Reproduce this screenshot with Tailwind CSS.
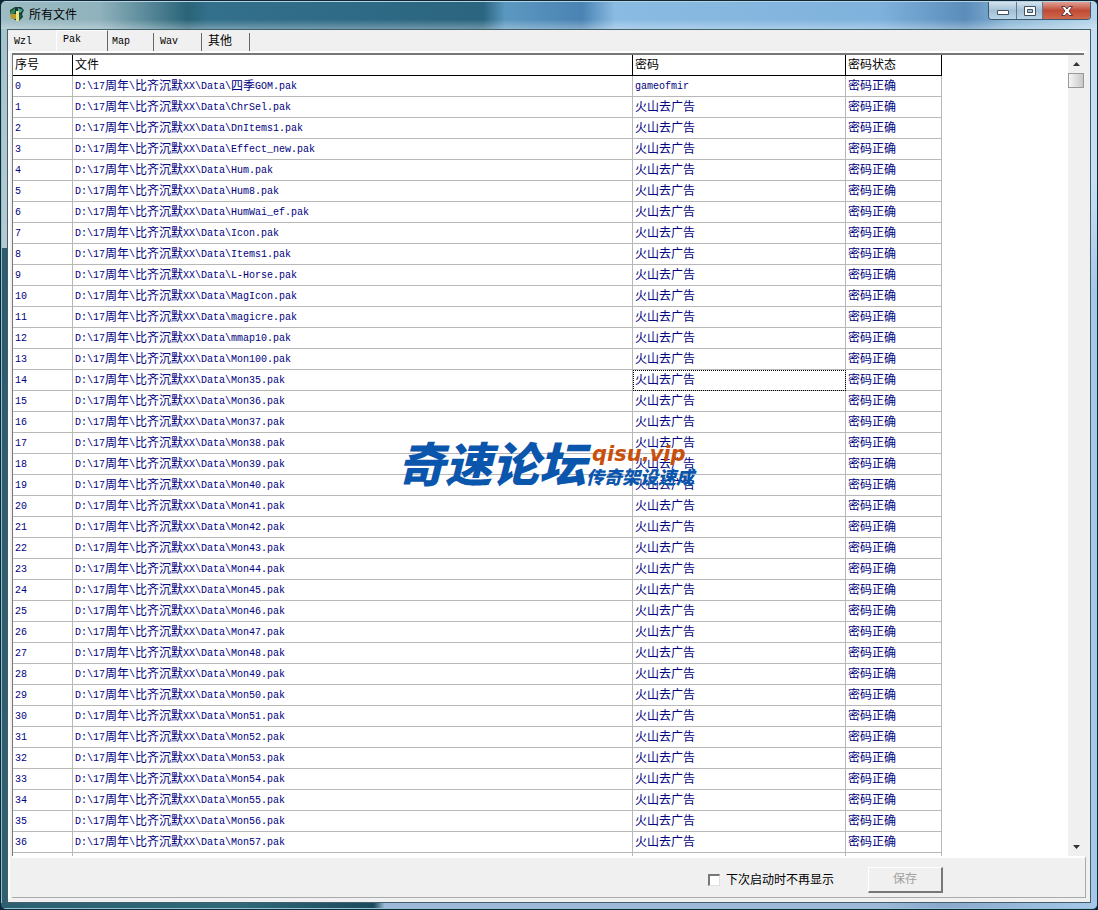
<!DOCTYPE html>
<html lang="zh-CN">
<head>
<meta charset="utf-8">
<title>所有文件</title>
<script src="https://cdn.jsdelivr.net/npm/@tailwindcss/browser@4"></script>
</head>
<body class="h-screen overflow-hidden bg-[#0d2233] font-['Liberation_Mono','Noto_Sans_CJK_SC',monospace] text-xs text-black">
<main class="relative flex h-screen flex-col overflow-hidden rounded-md border border-[#10283a] bg-linear-to-r from-[#2c5f70] via-[#3d6f8a] to-[#a3c9ea]">
  <header class="flex h-7 shrink-0 items-start justify-between border-t border-[#b5d3de] bg-[linear-gradient(180deg,transparent_65%,#ffffff50_100%),linear-gradient(90deg,#9dbcc4_0%,#8fb2bc_9%,#5d8c9c_13%,#2a6478_17%,#33708c_19%,#2b6580_44%,#5b98c0_46%,#4a83b4_53%,#8abbe2_56%,#7fb2dc_80%,#5b8dbb_88%,#8ab6d6_92%,#b5d5ea_100%)] pl-2">
    <h1 class="flex h-6 items-center gap-1 font-['Noto_Sans_CJK_SC',sans-serif] text-xs">
      <svg class="size-4" viewBox="0 0 16 16" aria-hidden="true"><path d="M1 4 6 1l6 0 3 3-2 4 1 3-4 4-4-1-4-3z" fill="#17392f"/><path d="M2 5 6 2v5L2 9z" fill="#2b8b55"/><path d="M9 2l5 2-3 3-2-1z" fill="#4ca4a0"/><path d="M1 8h6v5H2z" fill="#b69a31"/><path d="M7 5h3v10H7z" fill="#e8e389"/><path d="M10 8l3 1-2 5h-1z" fill="#225a36"/></svg>
      <span>所有文件</span>
    </h1>
    <div class="mr-1.5 flex h-[18px] overflow-hidden rounded-b border border-t-0 border-[#3f5a70]">
      <button type="button" aria-label="最小化" class="flex w-7 items-center justify-center border-r border-[#5c7a94] bg-linear-to-b from-[#d3e3ef] via-[#a4bfd4] to-[#b9d5e8]"><svg class="mt-1 h-[5px] w-3" viewBox="0 0 12 5"><path d="M.5.5h11v4H.5z" fill="#fff" stroke="#40505e"/></svg></button>
      <button type="button" aria-label="最大化" class="flex w-[26px] items-center justify-center border-r border-[#5c7a94] bg-linear-to-b from-[#d3e3ef] via-[#a4bfd4] to-[#b9d5e8]"><svg class="h-[10px] w-3" viewBox="0 0 12 10"><path d="M.5.5h11v9H.5zM3.500 3.500v3h5v-3z" fill="#fff" fill-rule="evenodd" stroke="#40505e"/></svg></button>
      <button type="button" aria-label="关闭" class="flex w-[47px] items-center justify-center bg-linear-to-b from-[#e0a095] via-[#c04a36] to-[#d0694c]"><svg class="h-[10px] w-3" viewBox="0 0 12 10"><path d="M.5.5h3.500L6 3 8 .5h3.500L8 5l3.500 4.500H8L6 7 4 9.500H.5L4 5z" fill="#fff" stroke="#5d3a3a"/></svg></button>
    </div>
  </header>
  <div class="flex min-h-0 flex-1">
    <div class="w-1.5 shrink-0 border-l border-[#8fc4cf] bg-[linear-gradient(180deg,#a9c3cb_0%,#b5cbd2_25%,#2d5c70_25%,#2f6070_100%)]"></div>
    <section class="flex min-w-0 flex-1 flex-col border border-[#41606c] bg-[#f0f0f0]">
      <nav role="tablist" class="flex h-[21px] shrink-0 items-end pl-0.5 text-[10px]">
        <button role="tab" type="button" class="h-[18px] w-[46px] pl-1 text-left">Wzl</button>
        <button role="tab" aria-selected="true" type="button" class="h-[21px] w-[52px] border-t border-l border-r border-t-white border-l-white border-r-[#666] pb-0.5 pl-1.5 text-left">Pak</button>
        <button role="tab" type="button" class="h-[18px] w-[46px] border-r border-[#666] pl-1 text-left">Map</button>
        <button role="tab" type="button" class="h-[18px] w-12 border-r border-[#666] pl-1.5 text-left">Wav</button>
        <button role="tab" type="button" class="h-[18px] w-12 border-r border-[#666] pl-1.5 text-left text-xs">其他</button>
      </nav>
      <div class="mr-1 flex min-h-0 flex-1 flex-col border-t-2 border-l-2 border-white pl-0.5">
        <div class="mr-0.5 flex min-h-0 flex-1 justify-between border-t-2 border-l border-[#777] bg-white">
          <div class="relative h-full min-w-0 overflow-hidden">
            <table class="w-[929px] table-fixed border-separate border-spacing-0 text-[#000080]">
              <colgroup><col class="w-[60px]"><col class="w-[560px]"><col class="w-[213px]"><col class="w-24"></colgroup>
              <thead class="text-left text-black [&_th]:h-[21px] [&_th]:border-r [&_th]:border-b [&_th]:border-black [&_th]:p-0 [&_th]:pt-px [&_th]:pl-0.5 [&_th]:leading-4 [&_th]:font-normal">
                <tr><th scope="col">序号</th><th scope="col">文件</th><th scope="col">密码</th><th scope="col">密码状态</th></tr>
              </thead>
              <tbody id="rows" class="[&_td]:h-[21px] [&_td]:border-r [&_td]:border-b [&_td]:border-[#b8b8b8] [&_td]:p-0 [&_td]:pt-0.5 [&_td]:pl-0.5 [&_td]:leading-4 [&_td]:whitespace-nowrap"></tbody>
            </table>
            <div class="pointer-events-none absolute top-[379px] left-[385px] flex items-center font-['Noto_Sans_CJK_SC',sans-serif] font-black whitespace-nowrap text-[#0b56ad] italic">
              <span class="text-[47px] leading-[56px]">奇速论坛</span>
              <span class="flex flex-col pt-1"><span class="pl-1.5 font-['DejaVu_Sans'] text-[21px] leading-6 font-bold text-[#c9500c]">qisu.vip</span><span class="text-[18px] leading-5">传奇架设速成</span></span>
            </div>
          </div>
          <div class="flex w-4 shrink-0 flex-col bg-[#f0f0f0]">
            <button type="button" aria-label="向上滚动" class="flex h-[18px] items-center justify-center"><svg class="h-1 w-[7px]" viewBox="0 0 7 4"><path d="M0 4 3.500 0 7 4z" fill="#333"/></svg></button>
            <div class="h-[15px] border border-[#999] bg-linear-to-r from-[#f5f5f5] to-[#c8c8c8]"></div>
            <div class="flex-1"></div>
            <button type="button" aria-label="向下滚动" class="flex h-[18px] items-center justify-center"><svg class="h-1 w-[7px]" viewBox="0 0 7 4"><path d="M0 0h7L3.500 4z" fill="#333"/></svg></button>
          </div>
        </div>
        <footer class="flex h-[42px] shrink-0 items-center justify-end gap-8 border-t-2 border-r border-b border-t-white border-r-[#aaa] border-b-[#aaa] pt-1 pr-[142px]">
          <label class="flex items-center gap-1.5"><input type="checkbox" class="size-3 appearance-none border border-t-2 border-l-2 border-[#e0e0e0] border-t-[#777] border-l-[#777] bg-white"><span class="pt-0.5 pr-0.5">下次启动时不再显示</span></label>
          <button type="button" disabled class="h-[26px] w-[75px] border border-r-2 border-b-2 border-white border-r-[#777] border-b-[#777] pt-0.5 text-[#a0a0a0]">保存</button>
        </footer>
      </div>
      <div class="h-1 shrink-0"></div>
    </section>
    <div class="w-1.5 shrink-0 bg-[linear-gradient(180deg,#c5dff0_0%,#c5dff0_18%,#a5c8e8_30%,#a5c8e8_100%)]"></div>
  </div>
  <div class="h-1.5 shrink-0 border-b border-[#8fc4d4] bg-[linear-gradient(90deg,#2c6070_0%,#2f6878_22%,#1c4a5c_34%,#9db8d8_35%,#9db8d8_80%,#8aa8cc_86%,#a5c8e8_100%)]"></div>
</main>
<script>
const names = ['四季GOM', 'ChrSel', 'DnItems1', 'Effect_new', 'Hum', 'Hum8', 'HumWai_ef', 'Icon', 'Items1', 'L-Horse', 'MagIcon', 'magicre', 'mmap10', 'Mon100'];
for (let n = 35; n <= 58; n++) names.push('Mon' + n);
// Latin runs use a 6px advance, half the width of the Chinese glyphs.
const mixed = s => s.replace(/[\x20-\x7e]+/g, '<span class="align-[1px] text-[10px] leading-3">$&</span>');
document.getElementById('rows').innerHTML = names.map((n, i) => `<tr>
<td>${mixed(String(i))}</td>
<td>${mixed('D:\\17周年\\比齐沉默XX\\Data\\' + n + '.pak')}</td>
<td${i === 14 ? ' class="outline-1 -outline-offset-1 outline-dotted outline-black"' : ''}>${mixed(i ? '火山去广告' : 'gameofmir')}</td>
<td>密码正确</td></tr>`).join('');
</script>
</body>
</html>
